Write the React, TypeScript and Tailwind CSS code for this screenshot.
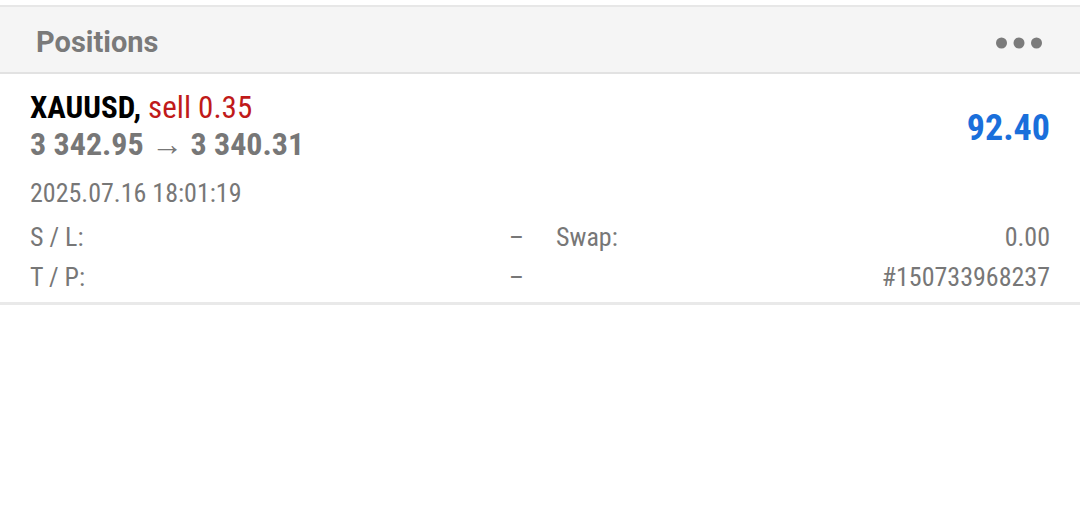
const DETAILS = [
  { left: 'S / L:', leftValue: '–', right: 'Swap:', rightValue: '0.00' },
  { left: 'T / P:', leftValue: '–', right: '', rightValue: '#150733968237' },
];

function MoreIcon() {
  return (
    <svg width="46" height="12" viewBox="0 0 46 12" fill="#7b7b7b">
      <circle cx="5.5" cy="6" r="5.5" />
      <circle cx="23" cy="6" r="5.5" />
      <circle cx="40.5" cy="6" r="5.5" />
    </svg>
  );
}

function PositionRow() {
  return (
    <div className="border-b-[3px] border-[#e9e9e9] px-[30px] pt-4 pb-[5px] font-['Roboto_Condensed',sans-serif]">
      <div className="flex items-center justify-between">
        <div>
          <div className="text-[31px] leading-[36px]">
            <span className="font-bold text-black">XAUUSD,</span>{' '}
            <span className="text-[#c01a1a]">sell 0.35</span>
          </div>
          <div className="text-[32px] leading-[36px] font-bold text-[#777777]">3 342.95 → 3 340.31</div>
        </div>
        <div className="pt-1 text-[36px] font-bold text-[#1a6fdb]">92.40</div>
      </div>
      <div className="mt-[15px] text-[26px] leading-[32px] text-[#777777]">2025.07.16 18:01:19</div>
      <div className="mt-2 grid grid-cols-2 gap-x-8 text-[26px] leading-[40px] text-[#777777]">
        {DETAILS.map((d) => (
          <div key={d.left} className="contents">
            <div className="flex justify-between">
              <span>{d.left}</span>
              <span>{d.leftValue}</span>
            </div>
            <div className="flex justify-between">
              <span>{d.right}</span>
              <span>{d.rightValue}</span>
            </div>
          </div>
        ))}
      </div>
    </div>
  );
}

export default function App() {
  return (
    <div className="h-[524px] bg-white pt-[5px]">
      <div className="flex h-[69px] items-center justify-between border-y-2 border-t-[#e7e7e7] border-b-[#e2e2e2] bg-[#f5f5f5] pt-[6px] pl-9 pr-[30px]">
        <span className="font-['Roboto',sans-serif] text-[29px] font-bold text-[#7a7a7a]">Positions</span>
        <div className="mr-2 flex">
          <MoreIcon />
        </div>
      </div>
      <PositionRow />
    </div>
  );
}
